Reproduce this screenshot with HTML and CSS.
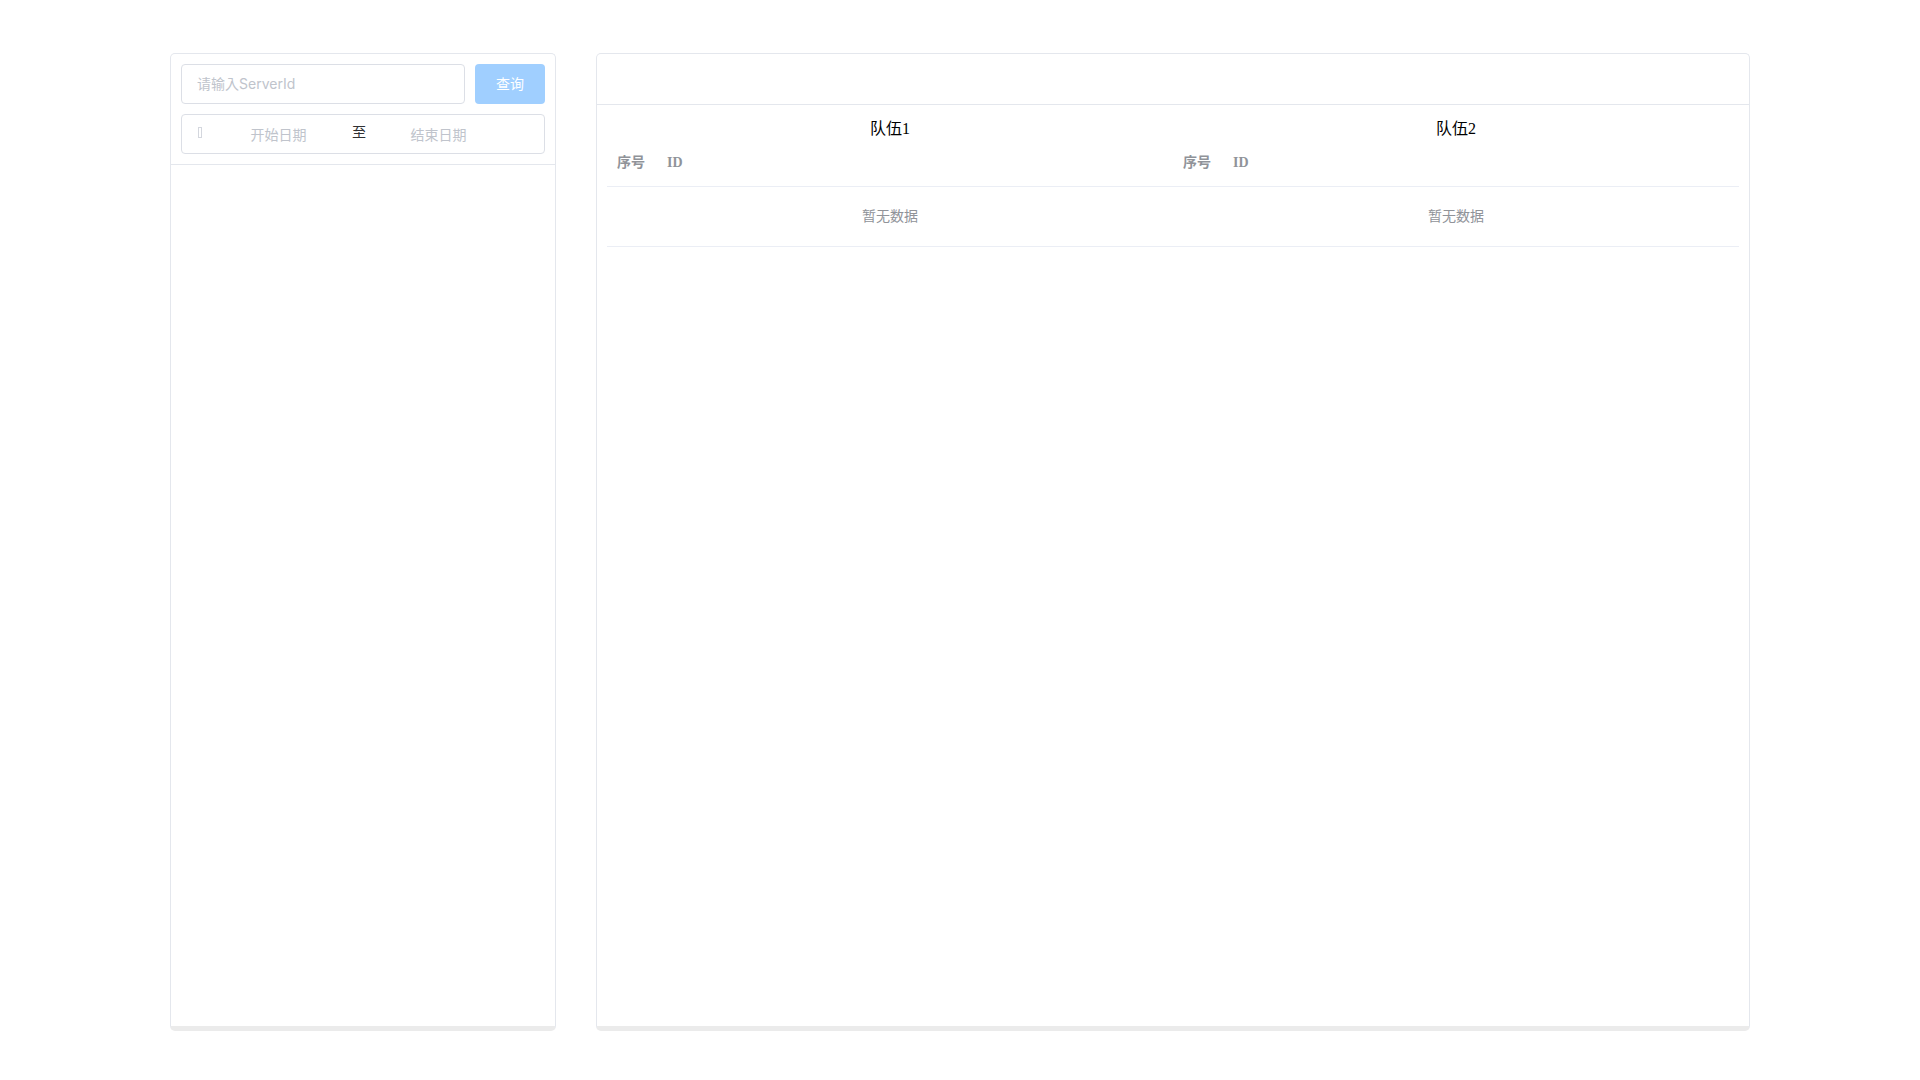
FILE: index.html
```html
<!DOCTYPE html>
<html lang="en">
<head>
  <meta charset="UTF-8">
  <meta name="viewport" content="width=device-width, initial-scale=1.0">
  <title>队伍查询</title>
  <link rel="stylesheet" href="styles.css">
</head>
<body>

<div class="page">
  <div class="card side-card">
    <div class="side-header">
      <div class="search-row">
        <input type="text" class="text-input" placeholder="请输入ServerId">
        <button class="query-btn">查询</button>
      </div>
      <div class="date-range">
        <i class="date-icon"></i>
        <input type="text" class="range-input" placeholder="开始日期">
        <span class="range-sep">至</span>
        <input type="text" class="range-input" placeholder="结束日期">
      </div>
    </div>
  </div>

  <div class="card main-card">
    <div class="main-header"></div>
    <div class="main-body">
      <div class="team">
        <div class="team-title">队伍1</div>
        <table class="team-table">
          <thead>
            <tr><th class="col-index">序号</th><th>ID</th></tr>
          </thead>
          <tbody>
            <tr><td colspan="2" class="empty">暂无数据</td></tr>
          </tbody>
        </table>
      </div>
      <div class="team">
        <div class="team-title">队伍2</div>
        <table class="team-table">
          <thead>
            <tr><th class="col-index">序号</th><th>ID</th></tr>
          </thead>
          <tbody>
            <tr><td colspan="2" class="empty">暂无数据</td></tr>
          </tbody>
        </table>
      </div>
    </div>
  </div>
</div>

</body>
</html>
```

FILE: styles.css
```css
body {
  margin: 0;
  overflow: hidden;
  background-color: #fff;
  font-family: "Liberation Serif", "Noto Sans CJK JP", serif;
  color: #000;
}

.page {
  display: flex;
  gap: 40px;
  height: 978px;
  padding: 53px 170px 0;
}

.card {
  box-sizing: border-box;
  height: 100%;
  background-color: #fff;
  border: 1px solid #e4e7ed;
  border-bottom: 5px solid #ebebeb;
  border-radius: 5px;
}

.side-card {
  width: 386px;
  flex-shrink: 0;
}

.main-card {
  flex: 1;
}

.side-header {
  display: flex;
  flex-direction: column;
  gap: 10px;
  padding: 10px;
  border-bottom: 1px solid #e4e7ed;
}

.search-row {
  display: flex;
  gap: 10px;
}

.text-input {
  flex: 1;
  min-width: 0;
  height: 40px;
  box-sizing: border-box;
  padding: 0 0 2px 15px;
  border: 1px solid #dcdfe6;
  border-radius: 4px;
  outline: none;
  font-family: Inter, "Noto Sans CJK JP", sans-serif;
  font-size: 14px;
}

input::placeholder {
  color: #c0c4cc;
  opacity: 1;
}

.query-btn {
  width: 70px;
  height: 40px;
  padding: 0 0 3px;
  border: none;
  border-radius: 4px;
  background-color: #a0cfff;
  color: #fff;
  font-family: Inter, "Noto Sans CJK JP", sans-serif;
  font-size: 14px;
}

.date-range {
  display: flex;
  align-items: center;
  height: 40px;
  box-sizing: border-box;
  padding: 0 10px;
  border: 1px solid #dcdfe6;
  border-radius: 4px;
}

.date-icon {
  width: 25px;
  margin-left: -5px;
  margin-top: -4px;
  text-align: center;
  font-style: normal;
  font-size: 14px;
  line-height: 30px;
}

.date-icon::before {
  content: "";
  display: inline-block;
  box-sizing: border-box;
  width: 4px;
  height: 11px;
  border: 1px solid #d4d7de;
  vertical-align: middle;
}

.range-input {
  width: 133px;
  height: 30px;
  padding: 0;
  border: none;
  outline: none;
  text-align: center;
  font-family: Inter, "Noto Sans CJK JP", sans-serif;
  font-size: 14px;
}

.range-sep {
  width: 27px;
  padding-left: 1px;
  box-sizing: border-box;
  text-align: center;
  font-size: 14px;
  line-height: 30px;
  color: #303133;
  margin-top: -2px;
}

.main-header {
  height: 50px;
  border-bottom: 1px solid #e4e7ed;
}

.main-body {
  display: flex;
  padding: 10px;
}

.team {
  flex: 1;
  min-width: 0;
}

.team-title {
  height: 27px;
  line-height: 27px;
  text-align: center;
  font-size: 16px;
}

.team-table {
  width: 100%;
  border-collapse: collapse;
  table-layout: fixed;
  font-size: 14px;
}

.team-table th {
  height: 44px;
  padding: 0 10px 2px;
  box-sizing: border-box;
  line-height: 23px;
  text-align: left;
  color: #909399;
  font-weight: bold;
  border-bottom: 1px solid #ebeef5;
}

.team-table .col-index {
  width: 50px;
}

.team-table .empty {
  height: 60px;
  box-sizing: border-box;
  padding: 0 0 2px;
  text-align: center;
  color: #909399;
  font-family: Inter, "Noto Sans CJK JP", sans-serif;
  border-bottom: 1px solid #ebeef5;
}
```
